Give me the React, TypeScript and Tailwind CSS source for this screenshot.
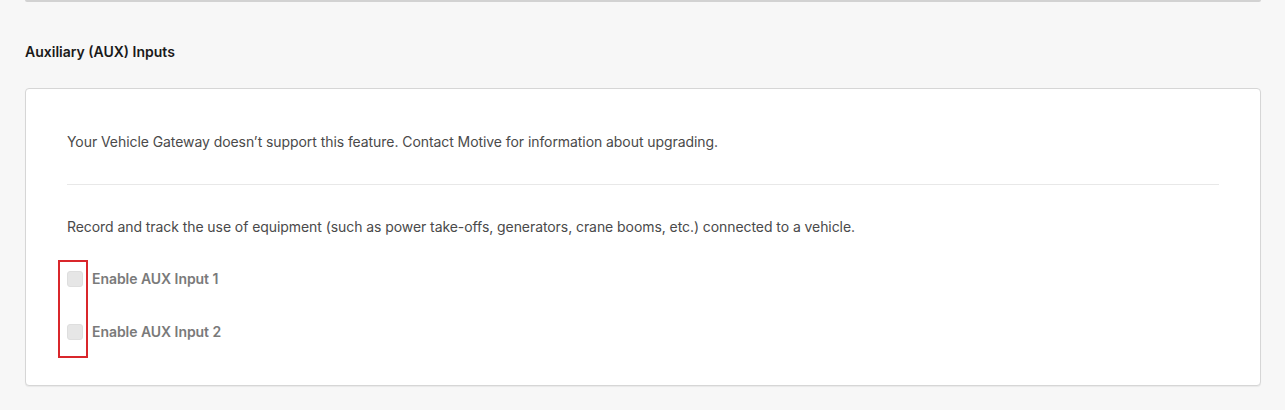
import React from 'react'

const AuxCheckbox = ({ label }: { label: string }) => (
  <label className="flex items-center h-5 gap-[9px] cursor-not-allowed">
    <span className="w-4 h-4 rounded-[3px] bg-[#e6e6e6] border border-[#dedede]" />
    <span className="text-[14px] font-semibold text-[#7a7a7a] tracking-[-0.05px]">{label}</span>
  </label>
)

export default function App() {
  return (
    <div className="min-h-[410px] bg-[#f7f7f7] pl-[25px] pr-[24px] font-['Inter','Liberation_Sans',sans-serif] text-[14px] leading-5">
      {/* bottom edge of the previous card */}
      <div className="h-[2px] bg-[#d2d2d2] rounded-b-sm" />

      <h2 className="mt-[40px] text-[14px] font-semibold text-[#1a1a1a]">Auxiliary (AUX) Inputs</h2>

      <div className="mt-[26px] bg-white border border-[#d6d6d6] rounded-[4px] shadow-[0_1px_1px_rgba(0,0,0,0.06)] px-[41px] pt-[43px] pb-[43px]">
        <p className="text-[#4a4a4a] tracking-[-0.07px]">
          Your Vehicle Gateway doesn’t support this feature. Contact Motive for information about upgrading.
        </p>
        <div className="mt-[32px] h-px bg-[#e8e8e8]" />
        <p className="mt-[32px] text-[#4a4a4a] tracking-[-0.07px]">
          Record and track the use of equipment (such as power take-offs, generators, crane booms, etc.) connected to a vehicle.
        </p>
        <div className="relative mt-[32px] flex flex-col gap-[33px]">
          <AuxCheckbox label="Enable AUX Input 1" />
          <AuxCheckbox label="Enable AUX Input 2" />
          <div className="absolute left-[-9px] top-[-9px] w-[30px] h-[98px] border-2 border-[#d9262b]" />
        </div>
      </div>
    </div>
  )
}
